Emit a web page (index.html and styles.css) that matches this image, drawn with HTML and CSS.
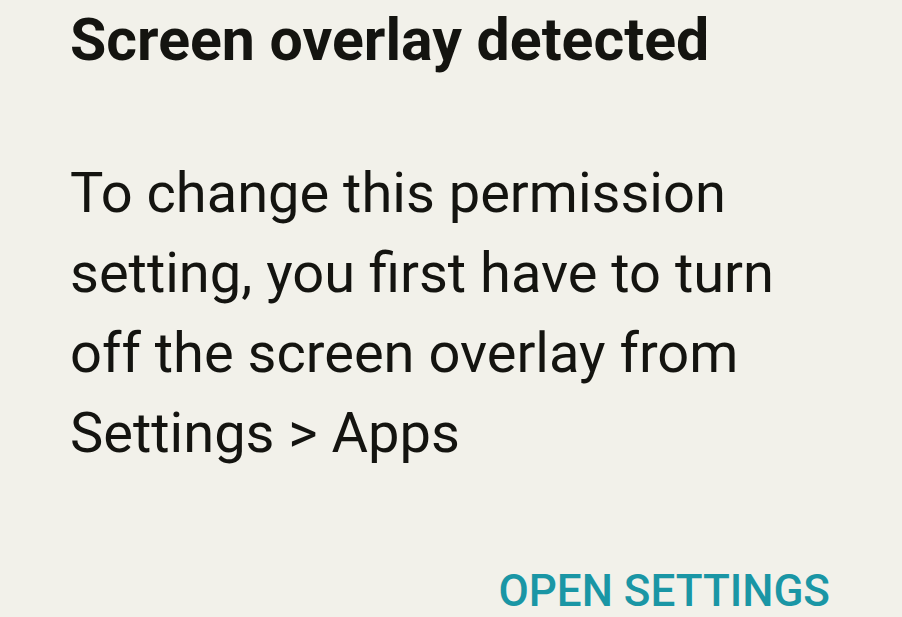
FILE: index.html
```html
<!DOCTYPE html>
<html>
<head>
<meta charset="utf-8">
<link rel="stylesheet" href="styles.css">
</head>
<body>
<div class="dialog">
  <h1 class="title">Screen overlay detected</h1>
  <p class="message">To change this permission setting, you first have to turn off the screen overlay from Settings &gt; Apps</p>
  <div class="actions"><span class="button">OPEN SETTINGS</span></div>
</div>
</body>
</html>
```
FILE: styles.css
```css
html, body {
  margin: 0;
  padding: 0;
  background: #f2f1ea;
}
.dialog {
  width: 902px;
  height: 617px;
  box-sizing: border-box;
  padding: 0 72px 0 70px;
  font-family: Roboto, "Noto Sans", sans-serif;
  color: #141410;
  display: flex;
  flex-direction: column;
  overflow: hidden;
}
.title {
  margin: 0;
  font-size: 59px;
  font-weight: 700;
  line-height: 80px;
}
.message {
  margin: 73px 0 0 0;
  font-size: 56px;
  font-weight: 400;
  line-height: 80px;
  width: 740px;
}
.actions {
  display: flex;
  justify-content: flex-end;
  margin-top: 88px;
}
.button {
  color: #1a96a5;
  font-size: 44px;
  font-weight: 500;
  line-height: 60px;
}
```
